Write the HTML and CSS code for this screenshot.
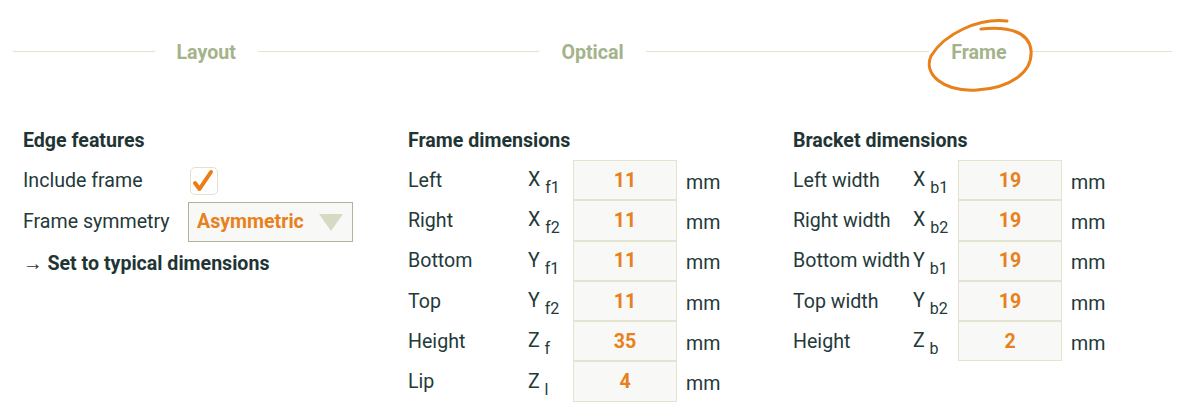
FILE: index.html
```html
<!DOCTYPE html>
<html>
<head>
<meta charset="utf-8">
<link rel="stylesheet" href="styles.css">
</head>
<body>
<nav class="steps">
  <div class="step"><span class="line"></span><span class="step-label">Layout</span><span class="line"></span></div>
  <div class="step"><span class="line"></span><span class="step-label">Optical</span><span class="line"></span></div>
  <div class="step"><span class="line"></span><span class="step-label active">Frame
    <svg class="circle" width="112" height="80" viewBox="0 0 112 80"><path d="M82,5 C54,2 20,17 6,40 C-2,58 18,76 52,74 C86,72 108,56 106,34 C104,17 86,10 56,13" fill="none" stroke="#e8801c" stroke-width="3" stroke-linecap="round"/></svg>
  </span><span class="line"></span></div>
</nav>

<main class="panels">
  <section class="panel">
    <h2 class="panel-title">Edge features</h2>
    <div class="opt-row">
      <span class="opt-label">Include frame</span>
      <span class="checkbox"><svg width="28" height="28" viewBox="0 0 28 28"><path d="M5,16 L9.5,22 L21,5" fill="none" stroke="#ec7d14" stroke-width="4" stroke-linecap="round" stroke-linejoin="round"/></svg></span>
    </div>
    <div class="opt-row">
      <span class="opt-label">Frame symmetry</span>
      <span class="select"><span class="select-value">Asymmetric</span><span class="caret"></span></span>
    </div>
    <div class="opt-row">
      <span class="link"><span class="arrow">→</span> Set to typical dimensions</span>
    </div>
  </section>

  <section class="panel">
    <h2 class="panel-title">Frame dimensions</h2>
    <div class="dim-row"><span class="dim-label">Left</span><span class="sym">X <sub>f1</sub></span><span class="val">11</span><span class="unit">mm</span></div>
    <div class="dim-row"><span class="dim-label">Right</span><span class="sym">X <sub>f2</sub></span><span class="val">11</span><span class="unit">mm</span></div>
    <div class="dim-row"><span class="dim-label">Bottom</span><span class="sym">Y <sub>f1</sub></span><span class="val">11</span><span class="unit">mm</span></div>
    <div class="dim-row"><span class="dim-label">Top</span><span class="sym">Y <sub>f2</sub></span><span class="val">11</span><span class="unit">mm</span></div>
    <div class="dim-row"><span class="dim-label">Height</span><span class="sym">Z <sub>f</sub></span><span class="val">35</span><span class="unit">mm</span></div>
    <div class="dim-row"><span class="dim-label">Lip</span><span class="sym">Z <sub>l</sub></span><span class="val">4</span><span class="unit">mm</span></div>
  </section>

  <section class="panel">
    <h2 class="panel-title">Bracket dimensions</h2>
    <div class="dim-row"><span class="dim-label">Left width</span><span class="sym">X <sub>b1</sub></span><span class="val">19</span><span class="unit">mm</span></div>
    <div class="dim-row"><span class="dim-label">Right width</span><span class="sym">X <sub>b2</sub></span><span class="val">19</span><span class="unit">mm</span></div>
    <div class="dim-row"><span class="dim-label">Bottom width</span><span class="sym">Y <sub>b1</sub></span><span class="val">19</span><span class="unit">mm</span></div>
    <div class="dim-row"><span class="dim-label">Top width</span><span class="sym">Y <sub>b2</sub></span><span class="val">19</span><span class="unit">mm</span></div>
    <div class="dim-row"><span class="dim-label">Height</span><span class="sym">Z <sub>b</sub></span><span class="val">2</span><span class="unit">mm</span></div>
  </section>
</main>
</body>
</html>
```

FILE: styles.css
```css
* { box-sizing: border-box; }

body {
  margin: 0;
  background: #ffffff;
  font-family: Roboto, "Liberation Sans", sans-serif;
  color: #24393a;
  font-size: 19.6px;
}

.steps {
  display: flex;
  height: 102px;
  align-items: center;
  margin: 0 15px 0 13px;
}

.step {
  flex: 1;
  display: flex;
  align-items: center;
}

.line {
  flex: 1;
  height: 1px;
  background: #e1e3cd;
}

.step-label {
  position: relative;
  padding: 4px 22px 0;
  font-weight: 700;
  font-size: 19.6px;
  line-height: 22px;
  color: #a4b38b;
}

.circle {
  position: absolute;
  left: -4px;
  top: -22px;
}

.panels {
  display: grid;
  grid-template-columns: 385px 385px 385px;
  padding-left: 23px;
  padding-top: 28px;
}

.panel-title {
  margin: 0 0 8px;
  font-size: 19.6px;
  font-weight: 700;
  line-height: 22px;
  color: #1f3535;
}

.opt-row {
  display: flex;
  align-items: center;
  height: 41px;
}

.opt-label {
  width: 165px;
}

.checkbox {
  display: block;
  width: 28px;
  height: 28px;
  margin-left: 2px;
  border: 1px solid #e6dfcb;
  border-radius: 5px;
}

.checkbox svg { display: block; margin: -1px; }

.select {
  display: flex;
  align-items: center;
  justify-content: space-between;
  width: 165px;
  height: 40px;
  padding: 0 9px 0 8px;
  border: 1.5px solid #b2b29a;
  background: #f8f8f6;
}

.select-value {
  color: #e8801c;
  font-weight: 700;
}

.caret {
  width: 0;
  height: 0;
  border-left: 12px solid transparent;
  border-right: 12px solid transparent;
  border-top: 17px solid #d6dac3;
  margin-top: 2px;
}

.link {
  font-weight: 700;
  color: #1f3535;
  margin-top: 2px;
}

.arrow { font-weight: 400; }

.dim-row {
  display: flex;
  align-items: center;
  height: 40.3px;
}

.dim-label { width: 120px; }

.sym {
  width: 45px;
  line-height: 22px;
}

.sym sub {
  font-size: 16px;
  line-height: 0;
  vertical-align: -7px;
}

.val {
  width: 104px;
  height: 100%;
  display: flex;
  align-items: center;
  justify-content: center;
  background: #f8f8f6;
  border: 1.5px solid #e4e3cf;
  color: #e8801c;
  font-weight: 700;
}

.unit {
  margin-left: 9px;
  margin-top: 4px;
}
```
